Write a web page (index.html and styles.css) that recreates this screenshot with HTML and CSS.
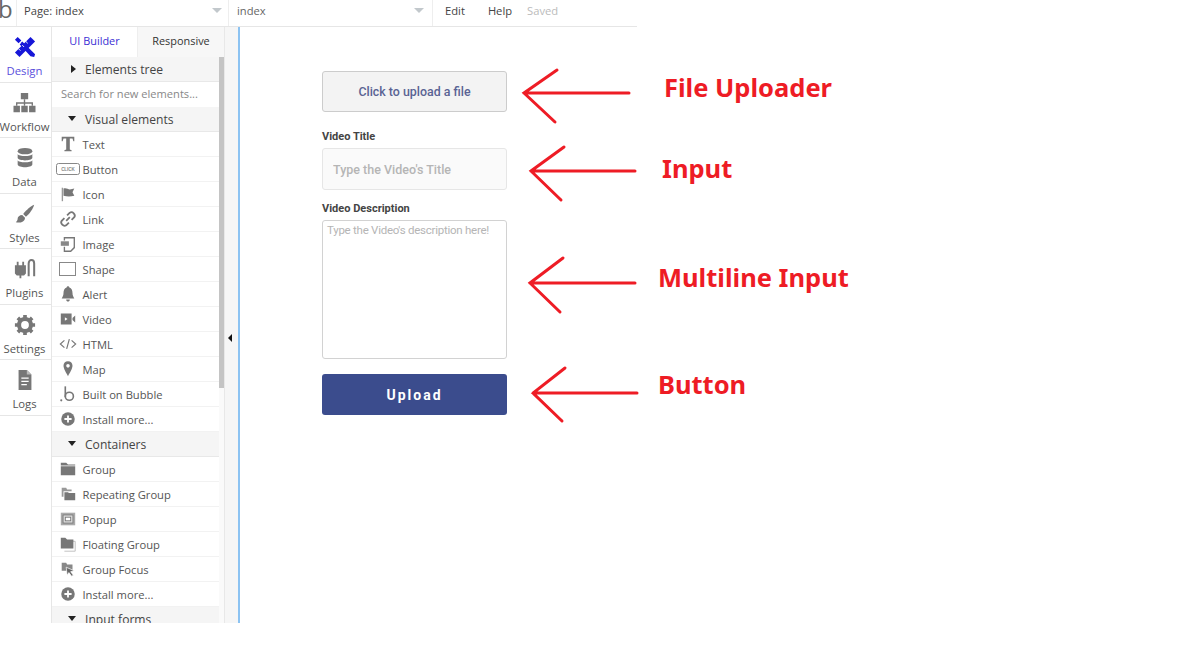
FILE: index.html
```html
<!DOCTYPE html>
<html lang="en">
<head>
  <meta charset="UTF-8">
  <title>UI Builder</title>
  <link rel="stylesheet" href="styles.css">
</head>
<body>
  <div class="app">
    <header class="topbar">
      <div class="logo">b</div>
      <div class="select select-page"><span>Page: index</span><i class="caret"></i></div>
      <div class="select select-view"><span>index</span><i class="caret"></i></div>
      <nav class="menu">
        <span class="menu-edit">Edit</span>
        <span class="menu-help">Help</span>
        <span class="menu-saved">Saved</span>
      </nav>
    </header>

    <div class="main">
      <aside class="rail">
        <div class="rail-item active">
          <svg class="rail-ico" viewBox="0 0 24 24"><path d="M4 1 8 5 5 8 1 4zM9 6l14 14-1 3-4-1L6 9z" fill="#1616d8"/><path d="M1 18 18 1l5 5L6 23z" fill="#1616d8"/><path d="M5 14l2 2M9 10l2 2M13 6l2 2M7 8l-2 2" stroke="#fff" stroke-width="1"/></svg>
          <span>Design</span>
        </div>
        <div class="rail-item">
          <svg class="rail-ico rail-ico-wide" viewBox="0 0 26 24"><path d="M9 1h8v7H9zM1 15h7v7H1zM9.500 15h7v7h-7zM18 15h7v7h-7z" fill="#777"/><path d="M13 8v4M4.500 15v-3h17v3M13 12v3" stroke="#777" stroke-width="1.500" fill="none"/></svg>
          <span>Workflow</span>
        </div>
        <div class="rail-item">
          <svg class="rail-ico" viewBox="0 0 24 24"><ellipse cx="12" cy="4.500" rx="8" ry="3.500" fill="#777"/><path d="M4 7.500c1 3 15 3 16 0v4.500c-1 3.500-15 3.500-16 0zM4 14.500c1 3 15 3 16 0V19c-1 4-15 4-16 0z" fill="#777"/></svg>
          <span>Data</span>
        </div>
        <div class="rail-item">
          <svg class="rail-ico" viewBox="0 0 24 24"><path d="M22 2c-3 1-9 6-12 10l3 3c4-3 8-9 9-13z" fill="#777"/><path d="M9 13c-3 0-5 2-5 4 0 2-1 3-2 4 4 1 10 0 10-5z" fill="#777"/></svg>
          <span>Styles</span>
        </div>
        <div class="rail-item">
          <svg class="rail-ico" viewBox="0 0 26 24"><path d="M2 8h12v9l-2 2H9v3H7v-3H4l-2-2zM4 4h2v4H4zM10 4h2v4h-2z" fill="#777"/><path d="M17 20V6c0-5 6-5 6 0v14" stroke="#777" stroke-width="2.200" fill="none"/></svg>
          <span>Plugins</span>
        </div>
        <div class="rail-item">
          <svg class="rail-ico" viewBox="0 0 24 24"><circle cx="12" cy="12" r="6.500" fill="none" stroke="#777" stroke-width="4.500"/><path d="M12 1v22M1 12h22M4.200 4.200l15.600 15.600M19.800 4.200 4.200 19.800" stroke="#777" stroke-width="4" stroke-dasharray="4.500 13.500 4.500"/></svg>
          <span>Settings</span>
        </div>
        <div class="rail-item">
          <svg class="rail-ico" viewBox="0 0 24 24"><path d="M5 1h9l5 5v17H5z" fill="#777"/><path d="M14 1v5h5" fill="#bbb"/><path d="M8 10h8M8 13.500h8M8 17h6" stroke="#fff" stroke-width="1.200"/></svg>
          <span>Logs</span>
        </div>
      </aside>

      <section class="panel">
        <div class="tabs">
          <div class="tab tab-active">UI Builder</div>
          <div class="tab">Responsive</div>
        </div>
        <div class="panel-body">
          <div class="list">
            <div class="head"><i class="tri-right"></i>Elements tree</div>
            <div class="search">Search for new elements...</div>

            <div class="head"><i class="tri-down"></i>Visual elements</div>
            <div class="row">
              <svg class="ico" viewBox="0 0 20 20"><path d="M3 2h14v5h-1l-1-3h-3v12l2 1v1H6v-1l2-1V4H5L4 7H3z" fill="#777"/></svg>Text</div>
            <div class="row">
              <svg class="ico ico-wide" viewBox="0 0 24 12"><rect x="0.500" y="0.500" width="23" height="11" rx="2" fill="#fff" stroke="#888"/><text x="12" y="7.500" class="click-text">CLICK</text></svg>Button</div>
            <div class="row">
              <svg class="ico" viewBox="0 0 20 20"><path d="M3 3h1.500v15H3z" fill="#999"/><path d="M5 4c3-1 5 1 7 1l5-1-2 4 2 4c-4 1-8 1-12 0z" fill="#777"/></svg>Icon</div>
            <div class="row">
              <svg class="ico" viewBox="0 0 20 20"><path d="M8 12 12 8M9 6l3-3c3-2 7 2 5 5l-3 3M11 14l-3 3c-3 2-7-2-5-5l3-3" fill="none" stroke="#777" stroke-width="2"/></svg>Link</div>
            <div class="row">
              <svg class="ico" viewBox="0 0 20 20"><path d="M6 6V3h11v11l-4 4H6v-5" fill="none" stroke="#777" stroke-width="1.500"/><rect x="2" y="7" width="9" height="5" fill="#888"/></svg>Image</div>
            <div class="row">
              <svg class="ico ico-shape" viewBox="0 0 17 14"><rect x="0.500" y="0.500" width="16" height="13" fill="#fff" stroke="#888"/></svg>Shape</div>
            <div class="row">
              <svg class="ico" viewBox="0 0 20 20"><path d="M10 1.500c1 0 1.500.7 1.500 1.300C14 3.500 15 6 15 9c0 3 1 4 2 6H3c1-2 2-3 2-6 0-3 1-5.500 3.500-6.200 0-.6.500-1.300 1.500-1.300zM8 16h4c0 3-4 3-4 0z" fill="#777"/></svg>Alert</div>
            <div class="row">
              <svg class="ico" viewBox="0 0 20 20"><path d="M2 4h12v12H2zM15 9l3-3v8l-3-3z" fill="#777"/><path d="M6.500 8v4l3-2z" fill="#fff"/></svg>Video</div>
            <div class="row">
              <svg class="ico" viewBox="0 0 20 20"><path d="M6 6l-4.500 4L6 14M14 6l4.500 4L14 14M11.500 4.500l-3 11" fill="none" stroke="#777" stroke-width="1.300"/></svg>HTML</div>
            <div class="row">
              <svg class="ico" viewBox="0 0 20 20"><path fill-rule="evenodd" d="M10 1.500c3.200 0 5 2.300 5 5 0 3-3 8-5 11.500C8 14.500 5 9.500 5 6.500c0-2.700 1.800-5 5-5zm0 3a2 2 0 1 0 0 4 2 2 0 0 0 0-4z" fill="#777"/></svg>Map</div>
            <div class="row">
              <svg class="ico" viewBox="0 0 20 20"><path d="M7 1.500v12" stroke="#777" stroke-width="1.800"/><circle cx="11.500" cy="12.500" r="4.500" fill="none" stroke="#777" stroke-width="1.800"/><circle cx="2.500" cy="17" r="1.200" fill="#777"/></svg>Built on Bubble</div>
            <div class="row">
              <svg class="ico" viewBox="0 0 20 20"><circle cx="10" cy="10" r="7.500" fill="#777"/><path d="M10 6v8M6 10h8" stroke="#fff" stroke-width="2"/></svg>Install more...</div>

            <div class="head"><i class="tri-down"></i>Containers</div>
            <div class="row">
              <svg class="ico" viewBox="0 0 20 20"><path d="M2 3h6l2 2h8v1H2zM2 7h16v10H2z" fill="#777"/></svg>Group</div>
            <div class="row">
              <svg class="ico" viewBox="0 0 20 20"><path d="M3 3h5l1 2h5v2H5v6H3z" fill="#999"/><path d="M6 8h4l1 1h7v8H6z" fill="#777"/></svg>Repeating Group</div>
            <div class="row">
              <svg class="ico" viewBox="0 0 20 20"><rect x="2" y="3" width="16" height="14" fill="#aaa"/><rect x="4.500" y="5.500" width="11" height="9" fill="#ddd" stroke="#777"/><rect x="7" y="8" width="6" height="4" fill="#fff" stroke="#777"/></svg>Popup</div>
            <div class="row">
              <svg class="ico" viewBox="0 0 20 20"><path d="M6 7h12v11H6" fill="none" stroke="#bbb"/><path d="M2 3h5l2 2h7v10H2z" fill="#777"/></svg>Floating Group</div>
            <div class="row">
              <svg class="ico" viewBox="0 0 20 20"><path d="M3 3h5l1 2h6v7H3z" fill="#888"/><path d="M8 8l9 4-4 1 3 4-2 1-3-4-2 3z" fill="#666" stroke="#fff" stroke-width=".8"/></svg>Group Focus</div>
            <div class="row">
              <svg class="ico" viewBox="0 0 20 20"><circle cx="10" cy="10" r="7.500" fill="#777"/><path d="M10 6v8M6 10h8" stroke="#fff" stroke-width="2"/></svg>Install more...</div>

            <div class="head"><i class="tri-down"></i>Input forms</div>
          </div>
          <div class="scroll"><div class="thumb"></div></div>
        </div>
      </section>

      <div class="gutter"><i class="tri-left"></i></div>

      <main class="canvas">
        <div class="form">
          <div class="uploader">Click to upload a file</div>
          <label class="field-label label-title" for="title">Video Title</label>
          <input class="text-input" id="title" type="text" placeholder="Type the Video's Title">
          <label class="field-label label-desc" for="desc">Video Description</label>
          <textarea class="text-area" id="desc" placeholder="Type the Video's description here!"></textarea>
          <button class="upload-btn">Upload</button>
        </div>
      </main>
    </div>
  </div>

  <!-- red notes drawn on top of the screenshot -->
  <svg class="arrows" viewBox="0 0 1200 659">
    <path d="M629 93H524M557 70 524 93 555 122"/>
    <path d="M635 171H531M564 147 531 171 561 200"/>
    <path d="M635 283H530M563 258 530 283 560 312"/>
    <path d="M637 393H533M565 368 533 393 562 421"/>
  </svg>
  <span class="note note-file">File Uploader</span>
  <span class="note note-input">Input</span>
  <span class="note note-multi">Multiline Input</span>
  <span class="note note-button">Button</span>
</body>
</html>
```

FILE: styles.css
```css
body {
  margin: 0;
  background: #fff;
  font-family: "Open Sans", sans-serif;
  color: #555;
}
.app {
  width: 637px;
  height: 623px;
  display: flex;
  flex-direction: column;
  overflow: hidden;
}

/* top bar */
.topbar {
  height: 26px;
  flex: none;
  display: flex;
  border-bottom: 1px solid #e6e6e6;
  font-size: 11.200px;
}
.logo {
  width: 18px;
  margin-left: -2px;
  font-size: 24px;
  line-height: 18px;
  color: #666;
  border-right: 1px solid #eee;
}
.select {
  display: flex;
  align-items: center;
  justify-content: space-between;
  border-right: 1px solid #eee;
  padding-bottom: 5px;
  box-sizing: border-box;
}
.select-page {
  width: 212px;
  padding-left: 7px;
  padding-right: 6px;
  color: #444;
}
.select-view {
  width: 204px;
  padding-left: 8px;
  padding-right: 8px;
  color: #666;
}
.caret {
  width: 0;
  height: 0;
  border-left: 5px solid transparent;
  border-right: 5px solid transparent;
  border-top: 5px solid #c2c8cc;
}
.menu {
  display: flex;
  padding-bottom: 5px;
  align-items: center;
}
.menu-edit {
  margin-left: 12px;
  color: #444;
}
.menu-help {
  margin-left: 23px;
  color: #444;
}
.menu-saved {
  margin-left: 15px;
  color: #bbb;
}

.main {
  flex: 1;
  display: flex;
  min-height: 0;
}

/* left rail */
.rail {
  width: 52px;
  flex: none;
  box-sizing: border-box;
  border-right: 1px solid #e6e6e6;
}
.rail-item {
  height: 55.500px;
  box-sizing: border-box;
  border-bottom: 1px solid #e6e6e6;
  display: flex;
  flex-direction: column;
  align-items: center;
  padding-top: 9px;
  font-size: 11.300px;
  color: #555;
  white-space: nowrap;
  margin-left: -2px;
}
.rail-item span {
  margin-top: 5px;
  line-height: 16px;
}
.rail-item.active {
  color: #5a4fdc;
}
.rail-ico {
  width: 24px;
  height: 22px;
  flex: none;
}
.rail-ico-wide {
  width: 27px;
}

/* elements panel */
.panel {
  width: 172px;
  flex: none;
  display: flex;
  flex-direction: column;
}
.tabs {
  height: 30px;
  flex: none;
  display: flex;
  font-size: 10.900px;
}
.tab {
  width: 86px;
  line-height: 28px;
  text-align: center;
  color: #333;
  background: #f7f7f7;
  border-left: 1px solid #eee;
}
.tab-active {
  width: 85px;
  border-left: none;
  background: #fff;
  color: #3a2fd4;
}
.panel-body {
  flex: 1;
  min-height: 0;
  display: flex;
}
.list {
  width: 167px;
  flex: none;
}
.head {
  height: 25px;
  box-sizing: border-box;
  display: flex;
  align-items: center;
  background: #f5f5f5;
  border-bottom: 1px solid #e8e8e8;
  font-size: 12.100px;
  color: #444;
  padding-left: 33px;
  position: relative;
}
.search {
  height: 25px;
  box-sizing: border-box;
  display: flex;
  align-items: center;
  padding-left: 9px;
  padding-bottom: 2px;
  font-size: 11.100px;
  color: #888;
  background: #fff;
}
.row {
  height: 25px;
  box-sizing: border-box;
  display: flex;
  align-items: center;
  border-bottom: 1px solid #f2f2f2;
  font-size: 11.200px;
  color: #555;
}
.ico {
  width: 18px;
  height: 18px;
  flex: none;
  margin-left: 6.500px;
  margin-right: 6px;
}
.ico-wide {
  width: 24px;
  height: 12px;
  margin-left: 3.500px;
  margin-right: 3px;
}
.ico-shape {
  width: 17px;
  height: 14px;
  margin-left: 7px;
  margin-right: 6.500px;
}
.click-text {
  font-family: "Liberation Sans", sans-serif;
  font-size: 4.500px;
  font-weight: 700;
  fill: #888;
  text-anchor: middle;
}
.tri-right, .tri-down {
  position: absolute;
  width: 0;
  height: 0;
}
.tri-right {
  left: 19px;
  top: 8px;
  border-top: 4px solid transparent;
  border-bottom: 4px solid transparent;
  border-left: 5px solid #222;
}
.tri-down {
  left: 16px;
  top: 9px;
  border-left: 4.500px solid transparent;
  border-right: 4.500px solid transparent;
  border-top: 5px solid #222;
}
.scroll {
  width: 5px;
  flex: none;
  background: #fafafa;
}
.thumb {
  height: 331px;
  background: #c4c4c4;
}

/* gutter with the collapse handle */
.gutter {
  width: 14px;
  flex: none;
  background: #f6f6f6;
  border-left: 1px solid #e8e8e8;
  box-sizing: border-box;
  display: flex;
  align-items: center;
  justify-content: center;
  padding-top: 26px;
  padding-right: 3px;
}
.tri-left {
  width: 0;
  height: 0;
  border-top: 4px solid transparent;
  border-bottom: 4px solid transparent;
  border-right: 4px solid #111;
}

/* page being edited */
.canvas {
  flex: 1;
  min-width: 0;
  border-left: 2px solid #8cc3f2;
  padding: 44px 0 0 82px;
}
.form {
  width: 185px;
  display: flex;
  flex-direction: column;
  font-family: Roboto, sans-serif;
}
.uploader {
  height: 41px;
  box-sizing: border-box;
  background: #f3f3f3;
  border: 1px solid #ccc;
  border-radius: 3px;
  display: flex;
  align-items: center;
  justify-content: center;
  font-size: 12.400px;
  font-weight: 500;
  color: #5a6394;
}
.field-label {
  font-size: 11px;
  font-weight: 700;
  color: #444;
  line-height: 14px;
}
.label-title {
  margin-top: 18px;
  margin-bottom: 4px;
}
.label-desc {
  margin-top: 12px;
  margin-bottom: 4px;
}
.text-input {
  height: 42px;
  box-sizing: border-box;
  background: #fafafa;
  border: 1px solid #e6e6e6;
  border-radius: 3px;
  padding: 1px 10px 0;
  font-family: Roboto, sans-serif;
  font-size: 12.500px;
  font-weight: 500;
}
.text-input::placeholder {
  color: #b5b5b5;
}
.text-area {
  height: 139px;
  box-sizing: border-box;
  background: #fff;
  border: 1px solid #d2d2d2;
  border-radius: 3px;
  padding: 2px 4px;
  font-family: Roboto, sans-serif;
  font-size: 11.500px;
  letter-spacing: -0.250px;
  resize: none;
}
.text-area::placeholder {
  color: #b5b5b5;
}
.upload-btn {
  height: 41px;
  margin-top: 15px;
  background: #3b4c8d;
  border: none;
  border-radius: 3px;
  color: #fff;
  font-family: Roboto, sans-serif;
  font-size: 14px;
  font-weight: 700;
  letter-spacing: 2px;
}

/* red annotations */
.arrows {
  position: absolute;
  left: 0;
  top: 0;
  width: 1200px;
  height: 659px;
  pointer-events: none;
}
.arrows path {
  fill: none;
  stroke: #ee1c25;
  stroke-width: 3;
  stroke-linecap: round;
}
.note {
  position: absolute;
  font-family: "Noto Sans", sans-serif;
  font-weight: 700;
  font-size: 25.500px;
  line-height: 32px;
  color: #ee1c25;
  white-space: nowrap;
}
.note-file {
  left: 664px;
  top: 71px;
}
.note-input {
  left: 662px;
  top: 152px;
}
.note-multi {
  left: 658px;
  top: 261px;
}
.note-button {
  left: 658px;
  top: 368px;
}
```
